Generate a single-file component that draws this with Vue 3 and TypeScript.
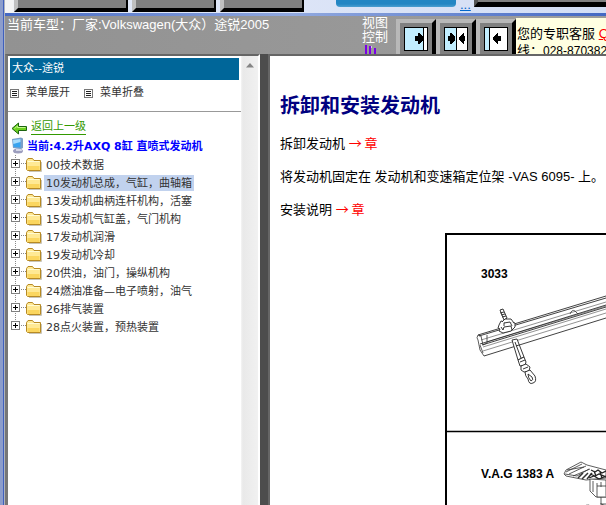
<script setup lang="ts">
import { ref } from 'vue'

interface Chapter {
  code: string
  title: string
}

const chapters: Chapter[] = [
  { code: '00', title: '技术数据' },
  { code: '10', title: '发动机总成，气缸，曲轴箱' },
  { code: '13', title: '发动机曲柄连杆机构，活塞' },
  { code: '15', title: '发动机气缸盖，气门机构' },
  { code: '17', title: '发动机润滑' },
  { code: '19', title: '发动机冷却' },
  { code: '20', title: '供油，油门，操纵机构' },
  { code: '24', title: '燃油准备—电子喷射，油气' },
  { code: '26', title: '排气装置' },
  { code: '28', title: '点火装置，预热装置' },
]

const selected = ref('10')
</script>

<template>
  <div class="window">
    <div class="top-strip">
      <span class="tab first"></span>
      <span class="tab"></span>
      <span class="tab"></span>
      <span class="blue-tab"></span>
      <a class="more" href="#">...</a>
      <span class="dark-tab"></span>
    </div>
    <div class="blue-line"></div>

    <header class="info-bar">
      <div class="vehicle">当前车型：厂家:Volkswagen(大众）途锐2005</div>
      <div class="view-control">
        <span>视图</span><span>控制</span>
        <svg width="14" height="10" viewBox="0 0 14 10" aria-hidden="true" shape-rendering="crispEdges">
          <path d="M0 0h2v10H0zM5 1h2v9H5zM10 3h2v7h-2z" fill="#7a00e6" />
          <path d="M2 0h1v3H2zM7 1h1v2H7zM12 4h1v1h-1z" fill="#d9c4f2" />
        </svg>
      </div>
      <div class="view-buttons">
        <button type="button" aria-label="显示左侧">
          <svg width="24" height="24" viewBox="0 0 24 24" shape-rendering="crispEdges">
            <path d="M0 0h24v24H0z" />
            <path d="M1 1h22v22H1z" fill="#fff" />
            <path d="M1 1h18v22H1z" fill="#c2eeff" />
            <path d="M19 1h1v22h-1zM11 9h3V6h1l4 4v3l-4 4h-1v-3h-3z" />
          </svg>
        </button>
        <button type="button" aria-label="左右并列">
          <svg width="24" height="24" viewBox="0 0 24 24" shape-rendering="crispEdges">
            <path d="M0 0h24v24H0z" />
            <path d="M1 1h22v22H1z" fill="#fff" />
            <path d="M1 1h11v22H1z" fill="#c2eeff" />
            <path d="M12 1h1v22h-1zM4 9h2V6h1l4 4v3l-4 4H6v-3H4zM21 9h-1V6h-1l-4 4v3l4 4h1v-3h1z" />
          </svg>
        </button>
        <button type="button" aria-label="显示右侧">
          <svg width="24" height="24" viewBox="0 0 24 24" shape-rendering="crispEdges">
            <path d="M0 0h24v24H0z" />
            <path d="M1 1h22v22H1z" fill="#fff" />
            <path d="M1 1h4v22H1z" fill="#c2eeff" />
            <path d="M5 1h1v22H5zM17 9h-3V6h-1l-4 4v3l4 4h1v-3h3z" />
          </svg>
        </button>
      </div>
      <div class="service">您的专职客服 <a href="#">QQ</a><br />线：<span class="phone">028-87038250</span></div>
    </header>

    <main class="panes">
      <nav class="sidebar">
        <div class="side-content">
          <h2>大众--途锐</h2>
          <div class="menu-tools">
            <button type="button"><i class="list-icon"></i>菜单展开</button>
            <button type="button"><i class="list-icon"></i>菜单折叠</button>
          </div>
          <div class="back">
            <svg width="16" height="13" viewBox="0 0 16 13" aria-hidden="true">
              <path d="M1 6.500 7.500 1V4.500h8v4h-8V12z" fill="#6bd11f" stroke="#1c6410" />
              <path d="M3.500 6.500 6.500 4v1.500h8" fill="none" stroke="#c4f58c" />
            </svg>
            <a href="#">返回上一级</a>
          </div>
          <div class="current">
            <svg width="14" height="17" viewBox="0 0 14 17" aria-hidden="true">
              <ellipse cx="7" cy="14" rx="5" ry="2.500" fill="#9c9ebe" />
              <path d="M5 11h5l1 3H5z" fill="#d5d8e8" />
              <path d="M1 2l9-1.500 2 1V11l-2 1-8-1z" fill="#7c9fc8" />
              <path d="M2 3l7.500-1v8.500L2.700 10z" fill="#38a3ef" />
              <path d="M2 3l7.500-1v3L2.300 7z" fill="#a9dcfc" />
            </svg>
            <b>当前:4.2升AXQ 8缸 直喷式发动机</b>
          </div>
          <ul class="tree">
            <li v-for="c in chapters" :key="c.code">
              <button class="toggle" type="button" :aria-label="c.title"></button>
              <i class="dots"></i>
              <svg width="16" height="15" viewBox="0 0 16 15" aria-hidden="true">
                <path d="M3 14.500h12.500V5" fill="none" stroke="#c9c5b8" />
                <path d="M.5 3.500 2 1.500h4.500l1.500 2h6.500v10H1.500l-1-1z" fill="#ffe994" stroke="#b78a24" />
                <path d="M1.500 9h12v4h-12z" fill="#fbd65f" />
                <path d="M1.500 4.500h12" stroke="#fffbd2" />
              </svg>
              <a href="#" :class="{ active: selected === c.code }" @click.prevent="selected = c.code">{{ c.code }}{{ c.title }}</a>
            </li>
          </ul>
        </div>
        <div class="scrollbar">
          <svg width="8" height="5" viewBox="0 0 8 5" aria-hidden="true">
            <path d="M0 4.500 4 0l4 4.500z" fill="#858585" />
          </svg>
        </div>
      </nav>
      <div class="splitter"></div>
      <article class="document">
        <h1>拆卸和安装发动机</h1>
        <p>拆卸发动机 <a href="#">→ 章</a></p>
        <p>将发动机固定在 发动机和变速箱定位架 -VAS 6095- 上。</p>
        <p>安装说明 <a href="#">→ 章</a></p>
        <svg class="figure" width="420" height="420" viewBox="0 0 420 420">
          <path d="M1 420V1h418v419" fill="none" stroke="#000" stroke-width="2" />
          <path d="M1 198.500h418" stroke="#000" stroke-width="1.500" />
          <text x="36" y="45">3033</text>
          <text x="36" y="245">V.A.G 1383 A</text>
          <!-- support rail -->
          <g fill="none" stroke="#333" stroke-width=".8">
            <path d="M33 102 161 63M34 103 161 65" stroke="#111" />
            <path d="M36 107 161 69M42 109 161 73" stroke="#777" />
            <path d="M35 111 161 72M37 112 161 74" stroke="#111" />
            <path d="M38 118 161 80M38 114 161 76" stroke="#777" />
            <path d="M39 123 161 85" stroke="#111" />
            <path d="M33 102q-2 3 0 5l2 10 4 6M33 102l3 1 2 9 4-2v-8M35 112l3 8" />
            <path d="M125 81q2-5 5-3l3 3" />
          </g>
          <!-- knob and threaded spindle -->
          <g fill="#fff" stroke="#222" stroke-width=".9">
            <path d="M55 77l3-1 4 9-3 2z" />
            <path d="M55 80l4-1M56 82l4-1M57 84l4-1" />
            <path d="M54 92l2-4 4 1 3-3 3 3 4 1 0 4-4 4-8 2-4-2 1-2-2-1z" />
            <path d="M57 89l3-3 6 0 3 4M58 97l1-3 7-1 1 4M56 94l2 3M59 93l0-3 6-1 2 4" />
          </g>
          <!-- hanger and snap hook -->
          <g fill="#fff" stroke="#222" stroke-width=".9">
            <path d="M67 107l5-1 7 18-6 3z" />
            <path d="M70 109l6 16M71 113l3-1" />
            <path d="M73 127l6-3 2 5-1 3-5 1-1-3zM75 129l5-2" />
            <path d="M76 133l5-2 4 3-1 4-5 1-3-2zM78 136l5-2" />
            <path d="M80 139q0 4 3 7 1 6 5 4 4-1 2-7l-5-6zM83 141q0 4 3 7 3-1 1-4z" />
          </g>
          <!-- hydraulic lift table -->
          <g fill="#fff" stroke="#333" stroke-width=".8">
            <path d="M119 241l2-4 15-8 6 3 19 5v8l-20 2-20-4z" />
            <path d="M121 239l16-8M124 241l17-8M128 243l17-7M122 237l17-3M120 241l12 2 12-7" fill="none" />
            <path d="M133 245l5-5M137 246l6-6M142 246l5-6" stroke-width="1.500" fill="none" />
            <path d="M146 237l4 2 3-2 4 3 4-2M145 241l5 2 4-2 7 3M144 245l5-2 5 3 7-3M149 238l2 5M155 239l2 6" fill="none" stroke-width="1.300" stroke="#222" />
            <path d="M145 246v12l6 6h10v-17z" />
            <path d="M148 248v11M152 250v14h9M152 253h9M156 249v5M156 264v7l5 2M154 273l-2 12M155 271h6M156 276h5M155 280h6M137 276q4-6 9-3l5 4M134 280l4-4" />
          </g>
        </svg>
      </article>
    </main>
  </div>
</template>

<style>
body {
  margin: 0;
  overflow: hidden;
}
</style>

<style scoped>
.window {
  box-sizing: border-box;
  display: flex;
  flex-direction: column;
  height: 100vh;
  padding-left: 5px;
  overflow: hidden;
  background: linear-gradient(90deg, #8c9dcc 3px, #4060bd 3px, #4060bd 4px, #aeb3bd 4px, #aeb3bd 5px, #999 5px);
  font-family: "Liberation Sans", "Noto Sans CJK SC", sans-serif;
  font-size: 13px;
}
button {
  font: inherit;
  color: inherit;
  padding: 0;
  border: 0;
  background: none;
}
.top-strip {
  display: flex;
  flex: none;
  gap: 4px;
  height: 13px;
  padding-left: 9px;
  overflow: hidden;
  background: linear-gradient(90deg, #f4f4f4 8px, #e4eaf8 10px, #d3def5);
}
.tab {
  box-sizing: border-box;
  flex: none;
  width: 84px;
  height: 12px;
  border: solid #000;
  border-width: 0 2px 4px 4px;
  border-left-color: #c0c0c0;
  background: #808080;
}
.tab.first {
  width: 114px;
}
.blue-tab {
  width: 120px;
  height: 7px;
  margin-left: 28px;
  border-radius: 0 0 4px 4px;
  background: linear-gradient(#2386c3 4px, #4b9ed0);
}
.more {
  width: 10px;
  font-size: 13px;
  line-height: 10px;
  color: #0066cc;
}
.dark-tab {
  box-sizing: border-box;
  flex: 1;
  height: 7px;
  border-left: 4px solid #555;
  border-bottom: 5px solid #000;
  background: #808080;
}
.blue-line {
  flex: none;
  height: 3px;
  background: linear-gradient(90deg, #4468c3, #91a9df 48%, #4468c3);
}
.info-bar {
  display: flex;
  flex: none;
  height: 38px;
  overflow: hidden;
  background: linear-gradient(90deg, #929292, #9c9c9c);
  color: #fff;
}
.vehicle {
  flex: none;
  width: 355px;
  padding-left: 2px;
  box-sizing: border-box;
  line-height: 17px;
  white-space: nowrap;
}
.view-control {
  display: flex;
  flex: none;
  flex-direction: column;
  width: 36px;
  padding-left: 2px;
  box-sizing: border-box;
  line-height: 13px;
}
.view-control span {
  height: 15px;
}
.view-control svg {
  margin: 2px 0 0 2px;
}
.view-buttons {
  display: flex;
  flex: none;
  padding-top: 3px;
}
.view-buttons button {
  box-sizing: border-box;
  width: 40px;
  height: 40px;
  padding: 4px;
  border: 4px solid #000;
  border-top-color: #b8b8b8;
  border-left-color: #b8b8b8;
  background: #808080;
}
.view-buttons svg {
  display: block;
}
.service {
  flex: 1;
  margin-top: 2px;
  padding: 7px 0 0 1px;
  overflow: hidden;
  background: #ffffe1;
  color: #000;
  line-height: 17px;
  white-space: nowrap;
}
.service a {
  color: #f00;
}
.phone {
  font-size: 12px;
}
.panes {
  display: flex;
  flex: 1;
  min-height: 0;
}
.sidebar {
  box-sizing: border-box;
  display: flex;
  flex: none;
  width: 255px;
  border: solid #666;
  border-width: 2px 2px 0 3px;
  border-left-color: #777;
  border-right-color: #fff;
  background: #fff;
}
.side-content {
  flex: 1;
  color: #333;
  font-family: "DejaVu Sans", "Noto Sans CJK SC", sans-serif;
  font-size: 11px;
  white-space: nowrap;
}
h2 {
  margin: 2px 2px 0;
  padding-left: 2px;
  background: #069;
  color: #fff;
  font-size: 11px;
  font-weight: 400;
  line-height: 22px;
}
.menu-tools {
  display: flex;
  gap: 14px;
  height: 31px;
  padding: 0 2px;
  border-bottom: 1px solid #999;
}
.menu-tools button {
  display: flex;
  gap: 7px;
  height: 22px;
  align-items: center;
}
.list-icon {
  box-sizing: border-box;
  width: 9px;
  height: 9px;
  margin-top: 4px;
  border: 1px solid #777;
  background: repeating-linear-gradient(#222 0 1px, #fff 1px 2px) 1px 1px / 5px 5px no-repeat #fff;
}
.back {
  display: flex;
  gap: 4px;
  height: 25px;
  padding: 4px 0 0 3px;
  box-sizing: border-box;
  line-height: 22px;
}
.back svg {
  margin-top: 6px;
}
.back a {
  color: #390;
  height: 15px;
  margin-top: 3px;
  line-height: 16px;
  border-bottom: 1px solid #390;
  text-decoration: none;
}
.back a,
.tree a {
  display: block;
}
.current {
  display: flex;
  gap: 2px;
  height: 18px;
  padding-left: 3px;
  color: #00f;
  line-height: 20px;
}
.tree {
  margin: 0;
  padding: 0 0 0 3px;
  list-style: none;
}
.tree li {
  display: flex;
  align-items: center;
  height: 18px;
  background: repeating-linear-gradient(#888 0 1px, transparent 1px 2px) 4px 0 / 1px 18px no-repeat;
}
.tree li:last-child {
  background-size: 1px 8px;
}
.toggle {
  box-sizing: border-box;
  flex: none;
  width: 9px;
  height: 9px;
  border: 1px solid #808080;
  background:
    linear-gradient(#000, #000) 1px 3px / 5px 1px no-repeat,
    linear-gradient(#000, #000) 3px 1px / 1px 5px no-repeat,
    #fff;
}
.toggle,
.dots {
  margin-bottom: 2px;
}
.dots {
  width: 6px;
  height: 1px;
  background: repeating-linear-gradient(90deg, transparent 0 1px, #888 1px 2px);
}
.tree a {
  height: 16px;
  margin: 1px 0 0 2px;
  padding: 0 2px;
  color: #333;
  line-height: 17px;
  text-decoration: none;
}
.tree .active {
  background: #c1d2ee;
}
.scrollbar {
  flex: none;
  width: 17px;
  padding: 7px 0 0 5px;
  box-sizing: border-box;
  background: linear-gradient(90deg, #f4f4f4, #e9e9e9 2px, #f1f1f1);
}
.scrollbar svg {
  display: block;
}
.splitter {
  flex: none;
  width: 8px;
  background: #4d4d4d;
}
.document {
  flex: 1;
  min-width: 0;
  padding: 37px 0 0 10px;
  overflow: hidden;
  border: solid #666;
  border-width: 2px 0 0 2px;
  background: #fff;
  color: #000;
  white-space: nowrap;
}
h1 {
  margin: 0 0 15px;
  color: #000080;
  font-size: 20px;
  line-height: 26px;
}
p {
  margin: 0 0 13px;
  line-height: 20px;
}
.document a {
  color: #f00;
  font-family: "Noto Sans CJK SC", sans-serif;
  line-height: 16px;
  text-decoration: none;
}
.figure {
  display: block;
  margin-left: 165px;
}
.figure text {
  font-size: 12px;
  font-weight: 700;
}
</style>
